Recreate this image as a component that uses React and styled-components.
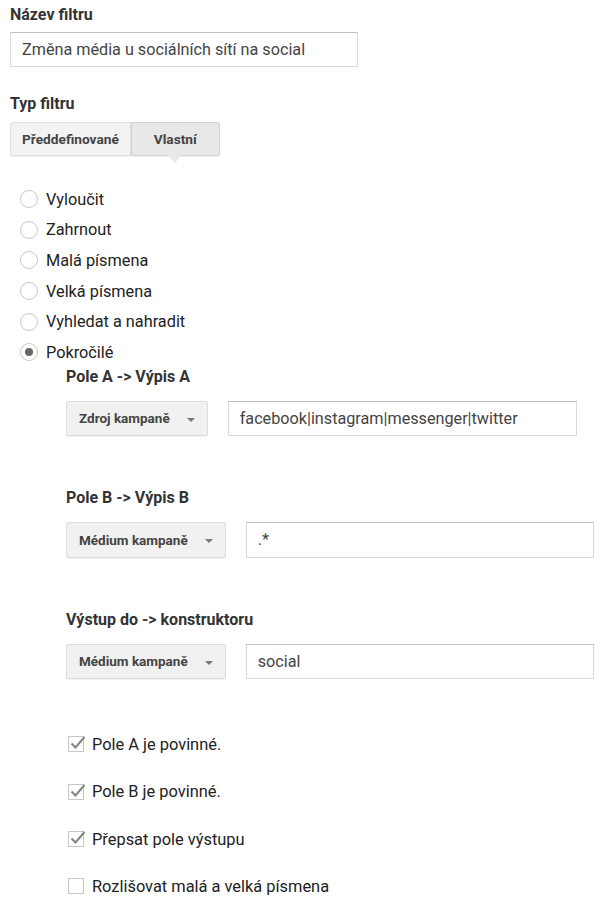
import React from 'react';
import styled, { createGlobalStyle } from 'styled-components';

const GlobalStyle = createGlobalStyle`
  body {
    margin: 0;
    background: #fff;
    font-family: Roboto, "Liberation Sans", Arial, sans-serif;
    color: #222;
  }
`;

const Page = styled.div`
  padding: 6px 0 20px 10px;
  width: 598px;
`;

const Label = styled.div`
  font-size: 16px;
  line-height: 18px;
  font-weight: bold;
  color: #333;
  margin-top: ${(p) => p.$top || 0}px;
  margin-bottom: ${(p) => p.$bottom || 0}px;
`;

const TextInput = styled.div`
  box-sizing: border-box;
  width: ${(p) => p.$width}px;
  height: ${(p) => p.$height || 35}px;
  border: 1px solid #d9d9d9;
  border-top-color: #c0c0c0;
  background: #fff;
  padding: 0 11px;
  display: flex;
  align-items: center;
  font-size: 16.2px;
  color: #444;
`;

const ButtonGroup = styled.div`
  display: flex;
  margin-top: 9px;
`;

const GroupButton = styled.div`
  position: relative;
  box-sizing: border-box;
  height: 34px;
  padding: 0 ${(p) => p.$pad}px;
  display: flex;
  align-items: center;
  font-size: 13.7px;
  font-weight: bold;
  color: #444;
  background: ${(p) => (p.$active ? '#e8e8e8' : '#f3f3f3')};
  border: 1px solid ${(p) => (p.$active ? '#d2d2d2' : '#e0e0e0')};
  border-radius: ${(p) => (p.$first ? '2px 0 0 2px' : '0 2px 2px 0')};
  box-shadow: 0 1px 1px rgba(0, 0, 0, 0.06);

  ${(p) =>
    p.$active &&
    `
    &::after {
      content: '';
      position: absolute;
      left: 50%;
      bottom: -8px;
      margin-left: -7px;
      border-left: 7px solid transparent;
      border-right: 7px solid transparent;
      border-top: 8px solid #e8e8e8;
    }
  `}
`;

const RadioList = styled.div`
  margin-top: 28px;
`;

const RadioRow = styled.div`
  display: flex;
  align-items: center;
  gap: 8px;
  height: 30.6px;
  padding-left: 10px;
  font-size: 16.3px;
  color: #222;
`;

const RadioCircle = styled.span`
  box-sizing: border-box;
  width: 18px;
  height: 18px;
  border-radius: 50%;
  border: 1px solid #c8c8c8;
  background: #fff;
  display: flex;
  align-items: center;
  justify-content: center;

  &::after {
    content: '';
    display: ${(p) => (p.$checked ? 'block' : 'none')};
    width: 8px;
    height: 8px;
    border-radius: 50%;
    background: #666;
  }
`;

const Advanced = styled.div`
  padding-left: 56px;
`;

const FieldRow = styled.div`
  display: flex;
  align-items: center;
  gap: 20px;
  margin-top: 15px;
`;

const Dropdown = styled.div`
  box-sizing: border-box;
  height: ${(p) => p.$height || 35}px;
  padding: 0 12px;
  display: flex;
  align-items: center;
  gap: 17px;
  background: #f1f1f1;
  border: 1px solid #dcdcdc;
  border-radius: 2px;
  box-shadow: 0 1px 1px rgba(0, 0, 0, 0.05);
  font-size: 13.5px;
  font-weight: bold;
  color: #444;
`;

const Caret = styled.span`
  width: 0;
  height: 0;
  border-left: 4px solid transparent;
  border-right: 4px solid transparent;
  border-top: 4px solid #777;
  margin-top: 3px;
`;

const CheckList = styled.div`
  margin-top: 42px;
  padding-left: 2px;
`;

const CheckRow = styled.div`
  display: flex;
  align-items: center;
  gap: 8px;
  height: 47.4px;
  font-size: 16.4px;
  color: #222;
`;

const CheckBox = styled.span`
  box-sizing: border-box;
  width: 16px;
  height: 16px;
  border: 1px solid #c6c6c6;
  background: #fff;
  position: relative;

  svg {
    position: absolute;
    left: 0px;
    top: -3px;
  }
`;

const radios = ['Vyloučit', 'Zahrnout', 'Malá písmena', 'Velká písmena', 'Vyhledat a nahradit', 'Pokročilé'];

const checks = [
  { text: 'Pole A je povinné.', on: true },
  { text: 'Pole B je povinné.', on: true },
  { text: 'Přepsat pole výstupu', on: true },
  { text: 'Rozlišovat malá a velká písmena', on: false },
];

const Check = () => (
  <svg width="18" height="18" viewBox="0 0 18 18">
    <path d="M2.5 9.5 L6.5 13.5 L15.5 3" fill="none" stroke="#858585" strokeWidth="2" />
  </svg>
);

const App = () => (
  <>
    <GlobalStyle />
    <Page>
      <Label $bottom={8}>Název filtru</Label>
      <TextInput $width={348}>Změna média u sociálních sítí na social</TextInput>

      <Label $top={28}>Typ filtru</Label>
      <ButtonGroup>
        <GroupButton $first $pad={11}>Předdefinované</GroupButton>
        <GroupButton $active $pad={22}>Vlastní</GroupButton>
      </ButtonGroup>

      <RadioList>
        {radios.map((r, i) => (
          <RadioRow key={r}>
            <RadioCircle $checked={i === radios.length - 1} />
            {r}
          </RadioRow>
        ))}
      </RadioList>

      <Advanced>
        <Label>Pole A -&gt; Výpis A</Label>
        <FieldRow>
          <Dropdown>
            Zdroj kampaně
            <Caret />
          </Dropdown>
          <TextInput $width={349}>facebook|instagram|messenger|twitter</TextInput>
        </FieldRow>

        <Label $top={53}>Pole B -&gt; Výpis B</Label>
        <FieldRow>
          <Dropdown $height={36}>
            Médium kampaně
            <Caret />
          </Dropdown>
          <TextInput $width={348} $height={36}>.*</TextInput>
        </FieldRow>

        <Label $top={53}>Výstup do -&gt; konstruktoru</Label>
        <FieldRow>
          <Dropdown>
            Médium kampaně
            <Caret />
          </Dropdown>
          <TextInput $width={348}>social</TextInput>
        </FieldRow>

        <CheckList>
          {checks.map((c) => (
            <CheckRow key={c.text}>
              <CheckBox>{c.on && <Check />}</CheckBox>
              {c.text}
            </CheckRow>
          ))}
        </CheckList>
      </Advanced>
    </Page>
  </>
);

export default App;
